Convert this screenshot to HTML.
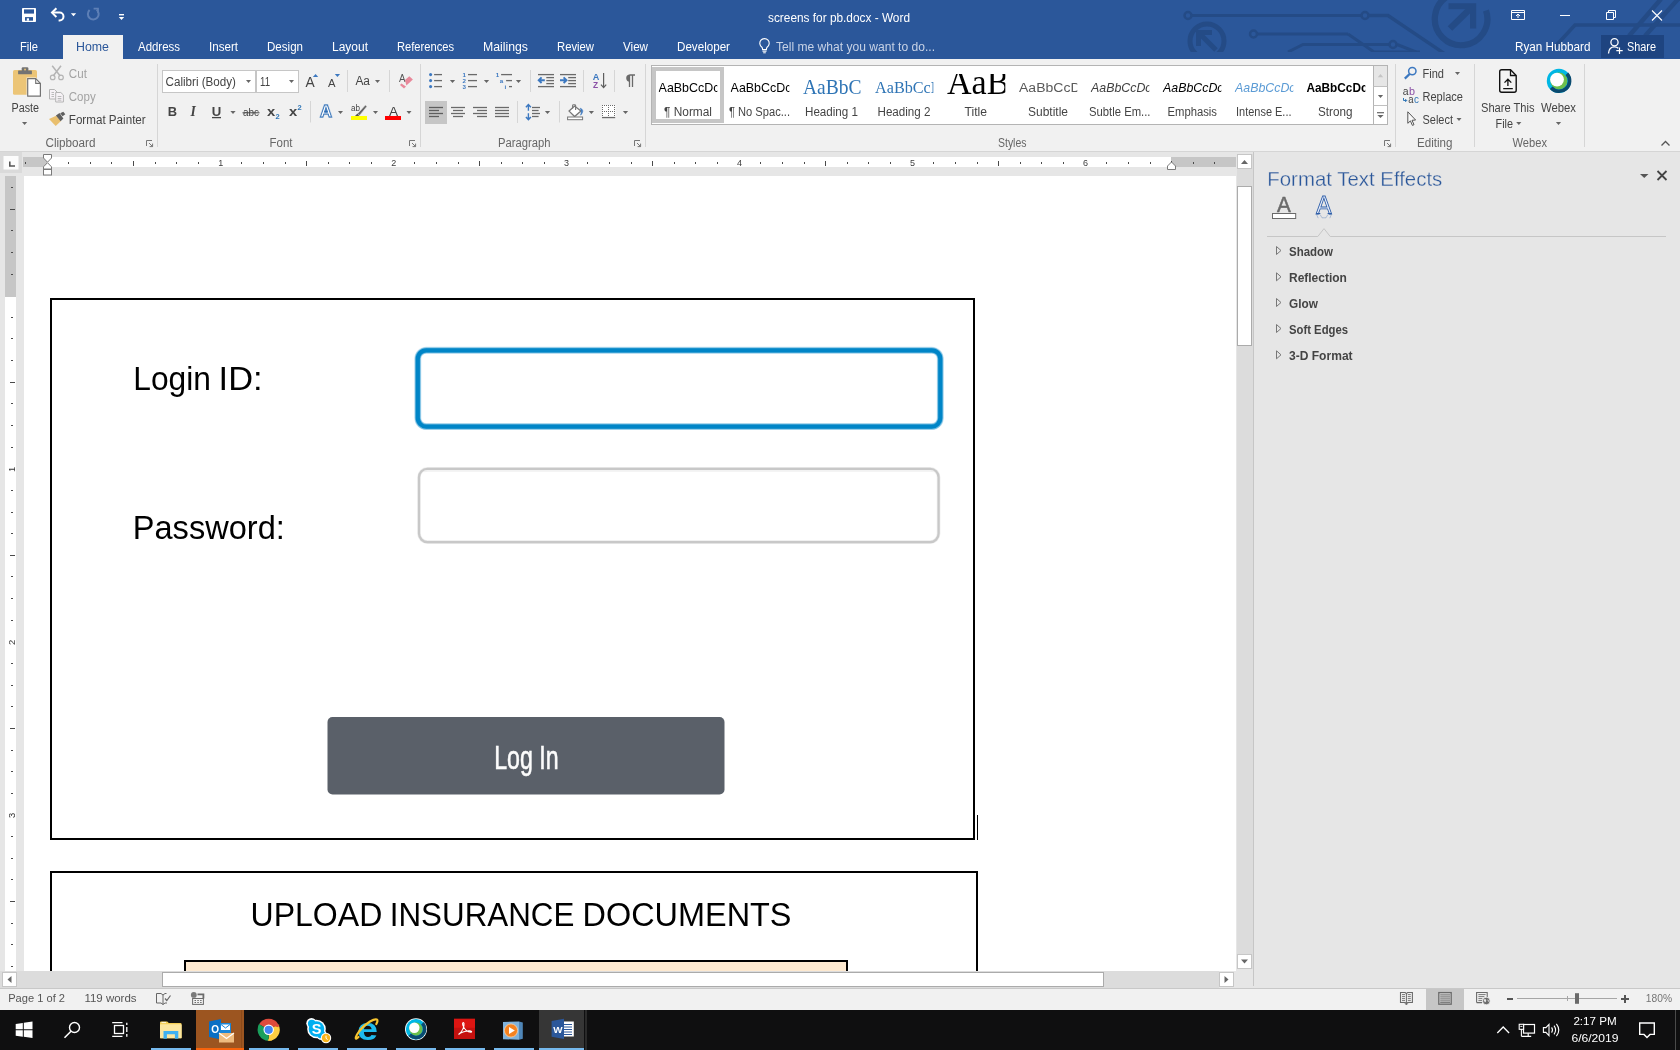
<!DOCTYPE html>
<html><head><meta charset="utf-8"><title>screens for pb.docx - Word</title>
<style>
html,body{margin:0;padding:0;width:1680px;height:1050px;overflow:hidden;background:#e6e6e6;}
svg{will-change:transform;display:block;position:absolute;left:0;top:0;}
text{font-family:"Liberation Sans",sans-serif;white-space:pre;}
.sf{font-family:"Liberation Serif",serif;}
</style></head><body>
<svg width="1680" height="1050" viewBox="0 0 1680 1050">

<!-- parts_doc -->
<rect x="0" y="152" width="1254" height="836" fill="#e6e6e6"/>
<rect x="24" y="176" width="1212" height="795" fill="#fff"/>
<rect x="23" y="157" width="1213" height="10" fill="#fff"/>
<rect x="23" y="157" width="24" height="10" fill="#c6c6c6"/>
<rect x="1171" y="157" width="65" height="10" fill="#c6c6c6"/>
<rect x="25" y="162" width="1" height="2" fill="#4a4a4a"/>
<rect x="68" y="162" width="1" height="2" fill="#4a4a4a"/>
<rect x="90" y="162" width="1" height="2" fill="#4a4a4a"/>
<rect x="111" y="162" width="1" height="2" fill="#4a4a4a"/>
<rect x="133" y="161" width="1" height="5" fill="#4a4a4a"/>
<rect x="155" y="162" width="1" height="2" fill="#4a4a4a"/>
<rect x="176" y="162" width="1" height="2" fill="#4a4a4a"/>
<rect x="198" y="162" width="1" height="2" fill="#4a4a4a"/>
<text x="220.8" y="165.8" font-size="9" fill="#3c3c3c" text-anchor="middle">1</text>
<rect x="241" y="162" width="1" height="2" fill="#4a4a4a"/>
<rect x="263" y="162" width="1" height="2" fill="#4a4a4a"/>
<rect x="285" y="162" width="1" height="2" fill="#4a4a4a"/>
<rect x="306" y="161" width="1" height="5" fill="#4a4a4a"/>
<rect x="328" y="162" width="1" height="2" fill="#4a4a4a"/>
<rect x="349" y="162" width="1" height="2" fill="#4a4a4a"/>
<rect x="371" y="162" width="1" height="2" fill="#4a4a4a"/>
<text x="393.7" y="165.8" font-size="9" fill="#3c3c3c" text-anchor="middle">2</text>
<rect x="414" y="162" width="1" height="2" fill="#4a4a4a"/>
<rect x="436" y="162" width="1" height="2" fill="#4a4a4a"/>
<rect x="458" y="162" width="1" height="2" fill="#4a4a4a"/>
<rect x="479" y="161" width="1" height="5" fill="#4a4a4a"/>
<rect x="501" y="162" width="1" height="2" fill="#4a4a4a"/>
<rect x="522" y="162" width="1" height="2" fill="#4a4a4a"/>
<rect x="544" y="162" width="1" height="2" fill="#4a4a4a"/>
<text x="566.6" y="165.8" font-size="9" fill="#3c3c3c" text-anchor="middle">3</text>
<rect x="587" y="162" width="1" height="2" fill="#4a4a4a"/>
<rect x="609" y="162" width="1" height="2" fill="#4a4a4a"/>
<rect x="631" y="162" width="1" height="2" fill="#4a4a4a"/>
<rect x="652" y="161" width="1" height="5" fill="#4a4a4a"/>
<rect x="674" y="162" width="1" height="2" fill="#4a4a4a"/>
<rect x="695" y="162" width="1" height="2" fill="#4a4a4a"/>
<rect x="717" y="162" width="1" height="2" fill="#4a4a4a"/>
<text x="739.6" y="165.8" font-size="9" fill="#3c3c3c" text-anchor="middle">4</text>
<rect x="760" y="162" width="1" height="2" fill="#4a4a4a"/>
<rect x="782" y="162" width="1" height="2" fill="#4a4a4a"/>
<rect x="804" y="162" width="1" height="2" fill="#4a4a4a"/>
<rect x="825" y="161" width="1" height="5" fill="#4a4a4a"/>
<rect x="847" y="162" width="1" height="2" fill="#4a4a4a"/>
<rect x="868" y="162" width="1" height="2" fill="#4a4a4a"/>
<rect x="890" y="162" width="1" height="2" fill="#4a4a4a"/>
<text x="912.5" y="165.8" font-size="9" fill="#3c3c3c" text-anchor="middle">5</text>
<rect x="933" y="162" width="1" height="2" fill="#4a4a4a"/>
<rect x="955" y="162" width="1" height="2" fill="#4a4a4a"/>
<rect x="977" y="162" width="1" height="2" fill="#4a4a4a"/>
<rect x="998" y="161" width="1" height="5" fill="#4a4a4a"/>
<rect x="1020" y="162" width="1" height="2" fill="#4a4a4a"/>
<rect x="1041" y="162" width="1" height="2" fill="#4a4a4a"/>
<rect x="1063" y="162" width="1" height="2" fill="#4a4a4a"/>
<text x="1085.5" y="165.8" font-size="9" fill="#3c3c3c" text-anchor="middle">6</text>
<rect x="1106" y="162" width="1" height="2" fill="#4a4a4a"/>
<rect x="1128" y="162" width="1" height="2" fill="#4a4a4a"/>
<rect x="1150" y="162" width="1" height="2" fill="#4a4a4a"/>
<rect x="1171" y="161" width="1" height="5" fill="#4a4a4a"/>
<rect x="1193" y="162" width="1" height="2" fill="#4a4a4a"/>
<rect x="1214" y="162" width="1" height="2" fill="#4a4a4a"/>
<path d="M43.5 154.5 H51.5 V158 L47.5 162.2 L43.5 158 Z" fill="#fff" stroke="#7a7a7a" stroke-width="1"/>
<path d="M43.5 169 V166.8 L47.5 162.7 L51.5 166.8 V169 Z" fill="#fff" stroke="#7a7a7a" stroke-width="1"/>
<rect x="43.5" y="169.5" width="8" height="5.5" fill="#fff" stroke="#7a7a7a" stroke-width="1"/>
<path d="M1167.5 169.5 V166 L1171.5 162 L1175.5 166 V169.5 Z" fill="#fff" stroke="#7a7a7a" stroke-width="1"/>
<rect x="0" y="152" width="22" height="21" fill="#dadada"/>
<rect x="3.5" y="156" width="15" height="13.5" fill="#fcfcfc"/>
<path d="M9.8 161.5 V166 H15" fill="none" stroke="#555" stroke-width="1.6"/>
<rect x="5" y="176" width="11" height="795" fill="#fff"/>
<rect x="5" y="176" width="11" height="121" fill="#c6c6c6"/>
<rect x="11" y="187" width="2" height="1" fill="#4a4a4a"/>
<rect x="10" y="209" width="5" height="1" fill="#4a4a4a"/>
<rect x="11" y="230" width="2" height="1" fill="#4a4a4a"/>
<rect x="11" y="252" width="2" height="1" fill="#4a4a4a"/>
<rect x="11" y="274" width="2" height="1" fill="#4a4a4a"/>
<rect x="11" y="317" width="2" height="1" fill="#4a4a4a"/>
<rect x="11" y="338" width="2" height="1" fill="#4a4a4a"/>
<rect x="11" y="360" width="2" height="1" fill="#4a4a4a"/>
<rect x="10" y="382" width="5" height="1" fill="#4a4a4a"/>
<rect x="11" y="403" width="2" height="1" fill="#4a4a4a"/>
<rect x="11" y="425" width="2" height="1" fill="#4a4a4a"/>
<rect x="11" y="447" width="2" height="1" fill="#4a4a4a"/>
<text transform="translate(15 469.3) rotate(-90)" font-size="9.4" fill="#333" text-anchor="middle">1</text>
<rect x="11" y="490" width="2" height="1" fill="#4a4a4a"/>
<rect x="11" y="512" width="2" height="1" fill="#4a4a4a"/>
<rect x="11" y="533" width="2" height="1" fill="#4a4a4a"/>
<rect x="10" y="555" width="5" height="1" fill="#4a4a4a"/>
<rect x="11" y="576" width="2" height="1" fill="#4a4a4a"/>
<rect x="11" y="598" width="2" height="1" fill="#4a4a4a"/>
<rect x="11" y="620" width="2" height="1" fill="#4a4a4a"/>
<text transform="translate(15 642.3) rotate(-90)" font-size="9.4" fill="#333" text-anchor="middle">2</text>
<rect x="11" y="663" width="2" height="1" fill="#4a4a4a"/>
<rect x="11" y="685" width="2" height="1" fill="#4a4a4a"/>
<rect x="11" y="706" width="2" height="1" fill="#4a4a4a"/>
<rect x="10" y="728" width="5" height="1" fill="#4a4a4a"/>
<rect x="11" y="750" width="2" height="1" fill="#4a4a4a"/>
<rect x="11" y="771" width="2" height="1" fill="#4a4a4a"/>
<rect x="11" y="793" width="2" height="1" fill="#4a4a4a"/>
<text transform="translate(15 815.3) rotate(-90)" font-size="9.4" fill="#333" text-anchor="middle">3</text>
<rect x="11" y="836" width="2" height="1" fill="#4a4a4a"/>
<rect x="11" y="858" width="2" height="1" fill="#4a4a4a"/>
<rect x="11" y="879" width="2" height="1" fill="#4a4a4a"/>
<rect x="10" y="901" width="5" height="1" fill="#4a4a4a"/>
<rect x="11" y="923" width="2" height="1" fill="#4a4a4a"/>
<rect x="11" y="944" width="2" height="1" fill="#4a4a4a"/>
<rect x="11" y="966" width="2" height="1" fill="#4a4a4a"/>
<clipPath id="dc"><rect x="24" y="176" width="1212" height="795"/></clipPath>
<g clip-path="url(#dc)">
<rect x="51" y="299" width="923" height="540" fill="#fff" stroke="#000" stroke-width="2"/>
<text x="133.3" y="390" font-size="33" fill="#000" textLength="77.7" lengthAdjust="spacingAndGlyphs">Login</text>
<text x="218.6" y="390" font-size="33" fill="#000" textLength="44.0" lengthAdjust="spacingAndGlyphs">ID:</text>
<rect x="417.8" y="350.3" width="522.5" height="76.3" fill="#fff" stroke="#0085c7" stroke-width="7" rx="8.5" stroke-opacity="0.22"/>
<rect x="417.8" y="350.3" width="522.5" height="76.3" fill="none" stroke="#0085c7" stroke-width="5.8" rx="8.5" stroke-opacity="0.45"/>
<rect x="417.8" y="350.3" width="522.5" height="76.3" fill="none" stroke="#0085c7" stroke-width="4.2" rx="8.5"/>
<text x="132.8" y="539" font-size="32.8" fill="#000" textLength="152.0" lengthAdjust="spacingAndGlyphs">Password:</text>
<rect x="419" y="468.8" width="519.6" height="73.3" fill="#fff" stroke="#c8c8c8" stroke-width="3.6" rx="8.5" stroke-opacity="0.35"/>
<rect x="419" y="468.8" width="519.6" height="73.3" fill="none" stroke="#c8c8c8" stroke-width="2.2" rx="8.5"/>
<path d="M424 471.6 Q425 471 428 471 H930 Q933 471 934 471.6" fill="none" stroke="#f1f1f1" stroke-width="1.6"/>
<rect x="327.5" y="717" width="397" height="77.5" fill="#5a6069" rx="5"/>
<text x="494.2" y="769.3" font-size="33.6" fill="#fcfcfc" textLength="64.4" lengthAdjust="spacingAndGlyphs" stroke="#fcfcfc" stroke-width="0.6">Log In</text>
<line x1="977.5" y1="815" x2="977.5" y2="840" stroke="#000" stroke-width="1" />
<rect x="51" y="872" width="926" height="200" fill="#fff" stroke="#000" stroke-width="2"/>
<text x="250.5" y="925.5" font-size="33" fill="#000" textLength="131.8" lengthAdjust="spacingAndGlyphs">UPLOAD</text>
<text x="389.8" y="925.5" font-size="33" fill="#000" textLength="184.5" lengthAdjust="spacingAndGlyphs">INSURANCE</text>
<text x="582.6" y="925.5" font-size="33" fill="#000" textLength="208.9" lengthAdjust="spacingAndGlyphs">DOCUMENTS</text>
<rect x="185" y="961" width="662" height="100" fill="#fde9d0" stroke="#000" stroke-width="2"/>
</g>
<rect x="1237" y="152" width="16" height="817" fill="#dcdcdc"/>
<rect x="1237" y="152" width="16" height="2" fill="#e6e6e6"/>
<rect x="1237.5" y="154.5" width="14" height="14" fill="#fff" stroke="#c6c6c6" stroke-width="1"/>
<path d="M1241 164 h7 l-3.5 -4 z" fill="#666"/>
<rect x="1237.5" y="186.5" width="14" height="159" fill="#fff" stroke="#ababab" stroke-width="1"/>
<rect x="1237.5" y="954.5" width="14" height="14" fill="#fff" stroke="#c6c6c6" stroke-width="1"/>
<path d="M1241 959.5 h7 l-3.5 4 z" fill="#666"/>
<rect x="0" y="971" width="1219" height="17" fill="#dcdcdc"/>
<rect x="1219" y="971" width="17" height="17" fill="#e6e6e6"/>
<rect x="1236" y="971" width="18" height="17" fill="#e6e6e6"/>
<rect x="2.5" y="972.5" width="14" height="14" fill="#fff" stroke="#c6c6c6" stroke-width="1"/>
<path d="M11.5 976 v7 l-4 -3.5 z" fill="#666"/>
<rect x="162.5" y="972.5" width="941" height="14" fill="#fff" stroke="#ababab" stroke-width="1"/>
<rect x="1219.5" y="972.5" width="14" height="14" fill="#fff" stroke="#c6c6c6" stroke-width="1"/>
<path d="M1224.5 976 v7 l4 -3.5 z" fill="#666"/>

<!-- parts_pane -->
<rect x="1254" y="152" width="426" height="836" fill="#e6e6e6"/>
<line x1="1253.5" y1="152" x2="1253.5" y2="986" stroke="#c6c6c6" stroke-width="1" />
<text x="1267.3" y="185.7" font-size="20.6" fill="#2b579a" textLength="175.0" lengthAdjust="spacingAndGlyphs" stroke="#e6e6e6" stroke-width="0.3">Format Text Effects</text>
<path d="M1640 174 h8.5 l-4.25 4 z" fill="#555"/>
<path d="M1657.5 171 L1666.5 180 M1666.5 171 L1657.5 180" fill="none" stroke="#444" stroke-width="1.8"/>
<text x="1277.1" y="211.7" font-size="22" fill="#6a6a6a" textLength="13.8" lengthAdjust="spacingAndGlyphs" stroke="#6a6a6a" stroke-width="0.5">A</text>
<rect x="1272.5" y="213.5" width="23.2" height="5" fill="#fff" stroke="#6a6a6a" stroke-width="1"/>
<text x="1316.1" y="214.3" font-size="25.5" fill="#e9eefa" stroke="#2e5ea8" stroke-width="0.9" textLength="15.7" lengthAdjust="spacingAndGlyphs">A</text>
<path d="M1316.3 213.7 H1320.3 M1327.6 213.7 H1331.6" fill="none" stroke="#2e5ea8" stroke-width="1.2"/>
<path d="M1316.8 215 L1318.2 218.2 M1331.2 215 L1329.8 218.2 M1320.4 215 L1322 217.8 H1326 L1327.6 215" fill="none" stroke="#2e5ea8" stroke-width="0.8" opacity="0.4"/>
<path d="M1267 236.5 H1317.8 L1324 228.6 L1330.2 236.5 H1666" fill="none" stroke="#c6c6c6" stroke-width="1"/>
<path d="M1276.5 246.5 v8 l4.5 -4 z" fill="none" stroke="#777" stroke-width="1"/>
<text x="1289" y="256" font-size="12" fill="#444" textLength="44" lengthAdjust="spacingAndGlyphs" font-weight="bold">Shadow</text>
<path d="M1276.5 272.8 v8 l4.5 -4 z" fill="none" stroke="#777" stroke-width="1"/>
<text x="1289" y="282.3" font-size="12" fill="#444" textLength="57.9" lengthAdjust="spacingAndGlyphs" font-weight="bold">Reflection</text>
<path d="M1276.5 298.5 v8 l4.5 -4 z" fill="none" stroke="#777" stroke-width="1"/>
<text x="1289" y="308" font-size="12" fill="#444" textLength="28.8" lengthAdjust="spacingAndGlyphs" font-weight="bold">Glow</text>
<path d="M1276.5 324.5 v8 l4.5 -4 z" fill="none" stroke="#777" stroke-width="1"/>
<text x="1289" y="334" font-size="12" fill="#444" textLength="59" lengthAdjust="spacingAndGlyphs" font-weight="bold">Soft Edges</text>
<path d="M1276.5 350.8 v8 l4.5 -4 z" fill="none" stroke="#777" stroke-width="1"/>
<text x="1289" y="360.3" font-size="12" fill="#444" textLength="63.6" lengthAdjust="spacingAndGlyphs" font-weight="bold">3-D Format</text>

<!-- parts_header -->
<rect x="0" y="0" width="1680" height="59" fill="#2b579a"/>
<clipPath id="hc"><rect x="1100" y="0" width="580" height="52"/></clipPath>
<g clip-path="url(#hc)">
<line x1="1192" y1="15.5" x2="1361" y2="15.5" stroke="#244b86" stroke-width="3" />
<circle cx="1188" cy="15.5" r="3.5" fill="#2b579a" stroke="#244b86" stroke-width="2.5"/>
<circle cx="1365" cy="15.5" r="3.5" fill="#2b579a" stroke="#244b86" stroke-width="2.5"/>
<path d="M1369 15.5 H1388 L1445 54" fill="none" stroke="#244b86" stroke-width="3.4"/>
<line x1="1257" y1="34" x2="1348" y2="34" stroke="#244b86" stroke-width="3" />
<circle cx="1253.5" cy="34" r="3.5" fill="#2b579a" stroke="#244b86" stroke-width="2.5"/>
<path d="M1348 34 L1374 52 H1420" fill="none" stroke="#244b86" stroke-width="3"/>
<path d="M1288 52 L1303 44.5 H1389" fill="none" stroke="#244b86" stroke-width="3"/>
<circle cx="1393" cy="44.5" r="3.5" fill="#2b579a" stroke="#244b86" stroke-width="2.5"/>
<path d="M1397 44.5 L1416 52" fill="none" stroke="#244b86" stroke-width="3"/>
<path d="M1469.5 -6 A26.3 26.3 0 1 0 1486 10.5" fill="none" stroke="#244b86" stroke-width="6.2"/>
<path d="M1450 28.5 L1473 6" fill="none" stroke="#244b86" stroke-width="6.5"/>
<path d="M1448.5 3.2 H1476.2 V28.5 H1470 V9.2 H1448.5 Z" fill="#244b86"/>
<circle cx="1207" cy="41" r="17" fill="none" stroke="#244b86" stroke-width="5"/>
<path d="M1216 50 L1200 34" fill="none" stroke="#244b86" stroke-width="5"/>
<path d="M1196 46 V30 H1212 V35 H1201 V46 Z" fill="#244b86"/>
<path d="M1552 50 L1575 25 H1680" fill="none" stroke="#244b86" stroke-width="3.6"/>
<path d="M1629 36 L1661 -1" fill="none" stroke="#244b86" stroke-width="4.5"/>
<path d="M1645 36 L1680 -3" fill="none" stroke="#244b86" stroke-width="4.5"/>
</g>
<rect x="22" y="8" width="14" height="14" fill="#fff" rx="0.8"/>
<rect x="24" y="9.4" width="10" height="4.2" fill="#2b579a"/>
<rect x="25" y="17.1" width="8" height="3.6" fill="#2b579a"/>
<rect x="26.8" y="18.3" width="2.2" height="2.4" fill="#fff"/>
<path d="M52.5 12.6 H59.6 A3.9 3.9 0 0 1 59.6 20.4 H58.6" fill="none" stroke="#fff" stroke-width="2"/>
<path d="M56.4 8.2 L52 12.6 L56.4 17" fill="none" stroke="#fff" stroke-width="2"/>
<path d="M70.8 13.3 h5.4 l-2.7 3.0 z" fill="#fff"/>
<path d="M96.6 9.8 A5.4 5.4 0 1 1 89.6 10.1" fill="none" stroke="#5d7fb6" stroke-width="2"/>
<path d="M93.6 8.6 H98 V13" fill="none" stroke="#5d7fb6" stroke-width="1.8"/>
<rect x="119" y="14" width="5" height="1.4" fill="#fff"/>
<path d="M118.8 17 h5.4 l-2.7 3.0 z" fill="#fff"/>
<text x="768" y="22" font-size="12" fill="#fff" textLength="142" lengthAdjust="spacingAndGlyphs">screens for pb.docx - Word</text>
<path d="M1511.5 10.5 H1524.5 V19.5 H1511.5 Z M1511.5 12.5 H1524.5" fill="none" stroke="#fff" stroke-width="1"/>
<path d="M1518 18 V14.2 M1516 16 L1518 14 L1520 16" fill="none" stroke="#fff" stroke-width="1"/>
<line x1="1560" y1="15.5" x2="1570" y2="15.5" stroke="#fff" stroke-width="1" />
<path d="M1606.5 12.5 H1613.5 V19.5 H1606.5 Z" fill="none" stroke="#fff" stroke-width="1"/>
<path d="M1608.5 12.5 V10.5 H1615.5 V17.5 H1613.5" fill="none" stroke="#fff" stroke-width="1"/>
<path d="M1652 10.5 L1662 20.5 M1662 10.5 L1652 20.5" fill="none" stroke="#fff" stroke-width="1.1"/>
<rect x="63" y="35" width="60" height="24" fill="#f1f1f1"/>
<text x="20" y="51" font-size="12" fill="#fff" textLength="18" lengthAdjust="spacingAndGlyphs">File</text>
<text x="76" y="51" font-size="12" fill="#2b579a" textLength="33" lengthAdjust="spacingAndGlyphs">Home</text>
<text x="138" y="51" font-size="12" fill="#fff" textLength="42" lengthAdjust="spacingAndGlyphs">Address</text>
<text x="209" y="51" font-size="12" fill="#fff" textLength="29" lengthAdjust="spacingAndGlyphs">Insert</text>
<text x="267" y="51" font-size="12" fill="#fff" textLength="36" lengthAdjust="spacingAndGlyphs">Design</text>
<text x="332" y="51" font-size="12" fill="#fff" textLength="36" lengthAdjust="spacingAndGlyphs">Layout</text>
<text x="397" y="51" font-size="12" fill="#fff" textLength="57" lengthAdjust="spacingAndGlyphs">References</text>
<text x="483" y="51" font-size="12" fill="#fff" textLength="45" lengthAdjust="spacingAndGlyphs">Mailings</text>
<text x="557" y="51" font-size="12" fill="#fff" textLength="37" lengthAdjust="spacingAndGlyphs">Review</text>
<text x="623" y="51" font-size="12" fill="#fff" textLength="25" lengthAdjust="spacingAndGlyphs">View</text>
<text x="677" y="51" font-size="12" fill="#fff" textLength="53" lengthAdjust="spacingAndGlyphs">Developer</text>
<path d="M761.9 47.2 A4.7 4.7 0 1 1 767.1 47.2 C766.5 48 766.4 48.6 766.4 49.6 H762.6 C762.6 48.6 762.5 48 761.9 47.2 Z" fill="none" stroke="#fff" stroke-width="1.1"/>
<line x1="762.5" y1="51.2" x2="766.5" y2="51.2" stroke="#fff" stroke-width="1.1" />
<line x1="763.2" y1="52.8" x2="765.8" y2="52.8" stroke="#fff" stroke-width="1" />
<text x="776" y="51" font-size="12" fill="#c8d3e6" textLength="159" lengthAdjust="spacingAndGlyphs">Tell me what you want to do...</text>
<text x="1515" y="51" font-size="12" fill="#fff" textLength="75.5" lengthAdjust="spacingAndGlyphs">Ryan Hubbard</text>
<rect x="1601" y="35" width="63" height="23" fill="#1e4480"/>
<circle cx="1614.5" cy="42.2" r="3.6" fill="none" stroke="#fff" stroke-width="1.3"/>
<path d="M1608.5 53.5 c0.3 -4.2 2.5 -6.6 6 -6.6 c1.6 0 2.8 0.5 3.8 1.4" fill="none" stroke="#fff" stroke-width="1.3"/>
<path d="M1619.5 47.5 V54 M1616.3 50.7 H1622.7" fill="none" stroke="#fff" stroke-width="1.2"/>
<text x="1627" y="51" font-size="12" fill="#fff" textLength="29" lengthAdjust="spacingAndGlyphs">Share</text>

<!-- parts_ribbon -->
<rect x="0" y="59" width="1680" height="92" fill="#f1f1f1"/>
<rect x="0" y="151" width="1680" height="1" fill="#d5d5d5"/>
<rect x="13" y="70" width="24" height="24.8" fill="#ecc577" rx="1.6"/>
<rect x="18.1" y="70.5" width="13.8" height="3.8" fill="#737373" rx="0.6"/>
<rect x="21.7" y="67.2" width="6.7" height="4" fill="#737373" rx="1.2"/>
<rect x="24.2" y="68.7" width="1.7" height="1.7" fill="#ecc577"/>
<path d="M26.6 77.6 H36 L41.5 83.1 V97.2 H26.6 Z" fill="#f1f1f1"/>
<path d="M27.7 78.7 H35.7 L40.4 83.4 V96.1 H27.7 Z" fill="#fff" stroke="#737373" stroke-width="1.2"/>
<path d="M35.7 78.7 V83.4 H40.4" fill="none" stroke="#737373" stroke-width="1.1"/>
<text x="11.5" y="112" font-size="12" fill="#444" textLength="27.5" lengthAdjust="spacingAndGlyphs">Paste</text>
<path d="M22.0 122 h5.2 l-2.6 3.0 z" fill="#666"/>
<path d="M52.2 65.7 L60.2 76 M61 65.7 L53.2 76" fill="none" stroke="#b4b4b4" stroke-width="1.5"/>
<circle cx="52.7" cy="77.4" r="2.3" fill="none" stroke="#b4b4b4" stroke-width="1.2"/>
<circle cx="61" cy="77.4" r="2.3" fill="none" stroke="#b4b4b4" stroke-width="1.2"/>
<text x="68.8" y="77.8" font-size="12" fill="#a3a3a3" textLength="18.1" lengthAdjust="spacingAndGlyphs">Cut</text>
<path d="M49.5 89.5 H54.5 L57 92 V99 H49.5 Z" fill="#f6f2f6" stroke="#b4b4b4" stroke-width="1"/>
<path d="M55.7 92.5 H60.8 L63.4 95 V102 H55.7 Z" fill="#f6f2f6" stroke="#b4b4b4" stroke-width="1"/>
<path d="M51.5 92.5 H54 M51.5 94.5 H54 M51.5 96.5 H54 M57.7 96.5 H61.4 M57.7 98.5 H61.4 M57.7 100.2 H61.4" fill="none" stroke="#b4b4b4" stroke-width="0.9"/>
<text x="68.8" y="100.6" font-size="12" fill="#a3a3a3" textLength="26.9" lengthAdjust="spacingAndGlyphs">Copy</text>
<path d="M49 119 L56.2 115.7 L61 121 L55.7 125.9 Z" fill="#e9bf6e"/>
<path d="M55.9 115.6 L59.5 113.1 L63.4 118.6 L60.6 121.2 Z" fill="#5f5f5f"/>
<path d="M60.2 113.2 L63.3 111.7 L65.3 114.3 L62.6 116.3 Z" fill="#5f5f5f"/>
<text x="68.8" y="123.5" font-size="12" fill="#444" textLength="76.9" lengthAdjust="spacingAndGlyphs">Format Painter</text>
<text x="45.5" y="147" font-size="12" fill="#666" textLength="50.0" lengthAdjust="spacingAndGlyphs">Clipboard</text>
<path d="M146.5 146 v-5.5 h5.5" fill="none" stroke="#777" stroke-width="1"/>
<path d="M149 143 l3.6 3.6 m0 -3 v3 h-3" fill="none" stroke="#777" stroke-width="1"/>
<line x1="157.5" y1="64" x2="157.5" y2="147" stroke="#d6d6d6" stroke-width="1" />
<rect x="162.5" y="70.5" width="93" height="22" fill="#fff" stroke="#c6c6c6" stroke-width="1"/>
<text x="165.5" y="86" font-size="12" fill="#444" textLength="70.5" lengthAdjust="spacingAndGlyphs">Calibri (Body)</text>
<path d="M246.0 80 h5 l-2.5 3 z" fill="#666"/>
<rect x="256.5" y="70.5" width="42" height="22" fill="#fff" stroke="#c6c6c6" stroke-width="1"/>
<text x="260" y="86" font-size="12" fill="#444" textLength="10" lengthAdjust="spacingAndGlyphs">11</text>
<path d="M289.0 80 h5 l-2.5 3 z" fill="#666"/>
<text x="305.4" y="87" font-size="14" fill="#444" textLength="9.2" lengthAdjust="spacingAndGlyphs">A</text>
<path d="M312.9 77 l2.65 -3 l2.65 3 z" fill="#3c78c0"/>
<text x="328" y="87" font-size="11" fill="#444" textLength="7.5" lengthAdjust="spacingAndGlyphs">A</text>
<path d="M334.8 74 h5.3 l-2.65 3 z" fill="#3c78c0"/>
<line x1="347.5" y1="70" x2="347.5" y2="92" stroke="#d6d6d6" stroke-width="1" />
<text x="355.4" y="85" font-size="12" fill="#444" textLength="14.6" lengthAdjust="spacingAndGlyphs">Aa</text>
<path d="M375.0 80 h5 l-2.5 3 z" fill="#666"/>
<line x1="389.5" y1="70" x2="389.5" y2="92" stroke="#d6d6d6" stroke-width="1" />
<text x="398.9" y="82" font-size="11.5" fill="#555" textLength="6.5" lengthAdjust="spacingAndGlyphs">A</text>
<path d="M405 79.9 L409.3 76.3 L412.9 79.5 L406.4 85.6 Z" fill="#e8889a"/>
<path d="M400 84.9 L401.4 83.4 L406 86.6 L404 88.4 Z" fill="#e8889a"/>
<text x="167.8" y="115.9" font-size="12.8" fill="#444" textLength="9.3" lengthAdjust="spacingAndGlyphs" font-weight="bold">B</text>
<text x="190.6" y="115.9" font-size="13.6" fill="#444" font-weight="bold" font-style="italic" class="sf">I</text>
<text x="211.8" y="115.9" font-size="12.6" fill="#444" textLength="9.5" lengthAdjust="spacingAndGlyphs" font-weight="bold">U</text>
<line x1="212" y1="117.6" x2="221" y2="117.6" stroke="#444" stroke-width="1.3" />
<path d="M230.4 111 h5.2 l-2.6 3.0 z" fill="#666"/>
<text x="243" y="115.9" font-size="10.5" fill="#444" textLength="16" lengthAdjust="spacingAndGlyphs">abc</text>
<line x1="242.5" y1="112.8" x2="259.5" y2="112.8" stroke="#444" stroke-width="1" />
<text x="267.1" y="115.9" font-size="13.4" fill="#444" textLength="8.2" lengthAdjust="spacingAndGlyphs" font-weight="bold">x</text>
<text x="275.4" y="119" font-size="7.2" fill="#2e75b6" textLength="4.2" lengthAdjust="spacingAndGlyphs" font-weight="bold">2</text>
<text x="289.1" y="115.9" font-size="13.4" fill="#444" textLength="8.2" lengthAdjust="spacingAndGlyphs" font-weight="bold">x</text>
<text x="297.4" y="110.3" font-size="7.2" fill="#2e75b6" textLength="4.2" lengthAdjust="spacingAndGlyphs" font-weight="bold">2</text>
<line x1="310.5" y1="101" x2="310.5" y2="122.5" stroke="#d6d6d6" stroke-width="1" />
<text x="320" y="117" font-size="16.6" fill="#fff" font-weight="bold" stroke="#9dbde0" stroke-width="2" textLength="12" lengthAdjust="spacingAndGlyphs" opacity="0.6">A</text>
<text x="320" y="117" font-size="16.6" fill="#fff" font-weight="bold" stroke="#2e6db5" stroke-width="0.8" textLength="12" lengthAdjust="spacingAndGlyphs">A</text>
<path d="M324.5 112.4 L326 108.6 L327.5 112.4 Z" fill="#2e6db5"/>
<path d="M338.0 111 h5 l-2.5 3 z" fill="#666"/>
<text x="351" y="111" font-size="9.5" fill="#444" textLength="9" lengthAdjust="spacingAndGlyphs">ab</text>
<path d="M357.6 113.6 L365.4 105 L367 106.4 L359.6 115.4 Z" fill="#666" stroke="#f1f1f1" stroke-width="0.6"/>
<path d="M355 116 L357.4 113.6 L359.4 115.4 L358 116 Z" fill="#555"/>
<rect x="351" y="116" width="16" height="4" fill="#ffff00"/>
<path d="M373.0 111 h5 l-2.5 3 z" fill="#666"/>
<text x="388.9" y="115.9" font-size="13.4" fill="#444" textLength="9.1" lengthAdjust="spacingAndGlyphs">A</text>
<rect x="385" y="116" width="16" height="4" fill="#f00"/>
<path d="M406.5 111 h5 l-2.5 3 z" fill="#666"/>
<text x="269.5" y="147" font-size="12" fill="#666" textLength="23.0" lengthAdjust="spacingAndGlyphs">Font</text>
<path d="M409.5 146 v-5.5 h5.5" fill="none" stroke="#777" stroke-width="1"/>
<path d="M412 143 l3.6 3.6 m0 -3 v3 h-3" fill="none" stroke="#777" stroke-width="1"/>
<line x1="420.5" y1="64" x2="420.5" y2="147" stroke="#d6d6d6" stroke-width="1" />
<circle cx="430.6" cy="74.6" r="1.55" fill="#3c78c0"/>
<line x1="434.1" y1="74.6" x2="442" y2="74.6" stroke="#6a6a6a" stroke-width="1.3" />
<circle cx="430.6" cy="80.6" r="1.55" fill="#3c78c0"/>
<line x1="434.1" y1="80.6" x2="442" y2="80.6" stroke="#6a6a6a" stroke-width="1.3" />
<circle cx="430.6" cy="86.6" r="1.55" fill="#3c78c0"/>
<line x1="434.1" y1="86.6" x2="442" y2="86.6" stroke="#6a6a6a" stroke-width="1.3" />
<path d="M449.9 80 h5.2 l-2.6 3.0 z" fill="#666"/>
<text x="462.4" y="76.69999999999999" font-size="6.2" fill="#3c78c0" font-weight="bold">1</text>
<line x1="468" y1="74.6" x2="477" y2="74.6" stroke="#6a6a6a" stroke-width="1.3" />
<text x="462.4" y="82.69999999999999" font-size="6.2" fill="#3c78c0" font-weight="bold">2</text>
<line x1="468" y1="80.6" x2="477" y2="80.6" stroke="#6a6a6a" stroke-width="1.3" />
<text x="462.4" y="88.69999999999999" font-size="6.2" fill="#3c78c0" font-weight="bold">3</text>
<line x1="468" y1="86.6" x2="477" y2="86.6" stroke="#6a6a6a" stroke-width="1.3" />
<path d="M483.9 80 h5.2 l-2.6 3.0 z" fill="#666"/>
<text x="495.8" y="76.7" font-size="6.2" fill="#3c78c0" font-weight="bold">1</text>
<line x1="501.1" y1="74.6" x2="512" y2="74.6" stroke="#6a6a6a" stroke-width="1.3" />
<text x="499.8" y="82.6" font-size="6.2" fill="#3c78c0" font-weight="bold">a</text>
<line x1="506.1" y1="80.6" x2="512" y2="80.6" stroke="#6a6a6a" stroke-width="1.3" />
<text x="504.6" y="88.7" font-size="6.2" fill="#3c78c0" font-weight="bold">i</text>
<line x1="509" y1="86.6" x2="512" y2="86.6" stroke="#6a6a6a" stroke-width="1.3" />
<path d="M515.9 80 h5.2 l-2.6 3.0 z" fill="#666"/>
<line x1="530.5" y1="70" x2="530.5" y2="92" stroke="#d6d6d6" stroke-width="1" />
<line x1="538" y1="74.6" x2="554" y2="74.6" stroke="#6a6a6a" stroke-width="1.3" />
<line x1="560" y1="74.6" x2="576" y2="74.6" stroke="#6a6a6a" stroke-width="1.3" />
<line x1="538" y1="86.6" x2="554" y2="86.6" stroke="#6a6a6a" stroke-width="1.3" />
<line x1="560" y1="86.6" x2="576" y2="86.6" stroke="#6a6a6a" stroke-width="1.3" />
<line x1="546.3" y1="77.6" x2="554" y2="77.6" stroke="#6a6a6a" stroke-width="1.3" />
<line x1="568.2" y1="77.6" x2="576" y2="77.6" stroke="#6a6a6a" stroke-width="1.3" />
<line x1="546.3" y1="80.6" x2="554" y2="80.6" stroke="#6a6a6a" stroke-width="1.3" />
<line x1="568.2" y1="80.6" x2="576" y2="80.6" stroke="#6a6a6a" stroke-width="1.3" />
<line x1="546.3" y1="83.6" x2="554" y2="83.6" stroke="#6a6a6a" stroke-width="1.3" />
<line x1="568.2" y1="83.6" x2="576" y2="83.6" stroke="#6a6a6a" stroke-width="1.3" />
<path d="M544.8 80.2 H539.5 M541.6 77.4 L538.7 80.2 L541.6 83" fill="none" stroke="#3c78c0" stroke-width="1.9"/>
<path d="M560 80.2 H565.6 M563.6 77.4 L566.5 80.2 L563.6 83" fill="none" stroke="#3c78c0" stroke-width="1.9"/>
<line x1="583.5" y1="70" x2="583.5" y2="92" stroke="#d6d6d6" stroke-width="1" />
<text x="592.7" y="79.8" font-size="9.6" fill="#3c78c0" textLength="6.6" lengthAdjust="spacingAndGlyphs" font-weight="bold">A</text>
<text x="592.9" y="87.9" font-size="9.2" fill="#8a4fa5" textLength="5.1" lengthAdjust="spacingAndGlyphs" font-weight="bold">Z</text>
<path d="M603.6 73 V87.6 M601 84.6 L603.6 87.6 L606.2 84.6" fill="none" stroke="#5e5e5e" stroke-width="1.2"/>
<line x1="614.5" y1="70" x2="614.5" y2="92" stroke="#d6d6d6" stroke-width="1" />
<path d="M629.5 75 H635 M629.5 75 V87 M632.5 75 V87" fill="none" stroke="#6a6a6a" stroke-width="1.3"/>
<path d="M629.8 74.5 A3.6 3.6 0 0 0 629.8 81.7 Z" fill="#6a6a6a"/>
<rect x="425" y="101" width="22" height="23" fill="#c6c6c6"/>
<line x1="429" y1="107.5" x2="443" y2="107.5" stroke="#5e5e5e" stroke-width="1.3" />
<line x1="451" y1="107.5" x2="465" y2="107.5" stroke="#6a6a6a" stroke-width="1.3" />
<line x1="473" y1="107.5" x2="487" y2="107.5" stroke="#6a6a6a" stroke-width="1.3" />
<line x1="495" y1="107.5" x2="509" y2="107.5" stroke="#6a6a6a" stroke-width="1.3" />
<line x1="429" y1="110.5" x2="439" y2="110.5" stroke="#5e5e5e" stroke-width="1.3" />
<line x1="453" y1="110.5" x2="463" y2="110.5" stroke="#6a6a6a" stroke-width="1.3" />
<line x1="477" y1="110.5" x2="487" y2="110.5" stroke="#6a6a6a" stroke-width="1.3" />
<line x1="495" y1="110.5" x2="509" y2="110.5" stroke="#6a6a6a" stroke-width="1.3" />
<line x1="429" y1="113.5" x2="443" y2="113.5" stroke="#5e5e5e" stroke-width="1.3" />
<line x1="451" y1="113.5" x2="465" y2="113.5" stroke="#6a6a6a" stroke-width="1.3" />
<line x1="473" y1="113.5" x2="487" y2="113.5" stroke="#6a6a6a" stroke-width="1.3" />
<line x1="495" y1="113.5" x2="509" y2="113.5" stroke="#6a6a6a" stroke-width="1.3" />
<line x1="429" y1="116.5" x2="439" y2="116.5" stroke="#5e5e5e" stroke-width="1.3" />
<line x1="453" y1="116.5" x2="463" y2="116.5" stroke="#6a6a6a" stroke-width="1.3" />
<line x1="477" y1="116.5" x2="487" y2="116.5" stroke="#6a6a6a" stroke-width="1.3" />
<line x1="495" y1="116.5" x2="509" y2="116.5" stroke="#6a6a6a" stroke-width="1.3" />
<line x1="517.5" y1="101" x2="517.5" y2="123" stroke="#d6d6d6" stroke-width="1" />
<path d="M528.4 104.5 V110.8 M525.9 107.2 L528.4 104.5 L530.9 107.2 M528.4 113.3 V119.6 M525.9 116.9 L528.4 119.6 L530.9 116.9" fill="none" stroke="#3c78c0" stroke-width="1.4"/>
<line x1="532" y1="107.5" x2="540" y2="107.5" stroke="#6a6a6a" stroke-width="1.3" />
<line x1="532" y1="110.5" x2="538.6" y2="110.5" stroke="#6a6a6a" stroke-width="1.3" />
<line x1="532" y1="113.5" x2="540" y2="113.5" stroke="#6a6a6a" stroke-width="1.3" />
<line x1="532" y1="116.5" x2="538.6" y2="116.5" stroke="#6a6a6a" stroke-width="1.3" />
<path d="M544.9 111 h5.2 l-2.6 3.0 z" fill="#666"/>
<line x1="559.5" y1="101" x2="559.5" y2="122.5" stroke="#d6d6d6" stroke-width="1" />
<path d="M569.1 111.1 L574.6 106.1 L580.9 111.1 L574.6 116.5 Z" fill="#fff" stroke="#777" stroke-width="1.3"/>
<path d="M572.6 108.6 V105.6 a0.9 0.9 0 0 1 0.9 -0.9 h1.2 a0.9 0.9 0 0 1 0.9 0.9 V110" fill="none" stroke="#777" stroke-width="1.1"/>
<path d="M580.2 108.2 C583 109.2 584 111.5 580.6 115.2 C581.6 112.6 581.5 110.6 580.2 108.2 Z" fill="#3c78c0" stroke="#3c78c0" stroke-width="0.6"/>
<rect x="567.6" y="117" width="15" height="2.7" fill="#fff" stroke="#777" stroke-width="1"/>
<path d="M588.8 111 h5.2 l-2.6 3.0 z" fill="#666"/>
<rect x="602" y="105" width="13.5" height="12.5" fill="#fff"/>
<rect x="602" y="105" width="1" height="1" fill="#6a6a6a"/>
<rect x="602" y="111" width="1" height="1" fill="#6a6a6a"/>
<rect x="604" y="105" width="1" height="1" fill="#6a6a6a"/>
<rect x="604" y="111" width="1" height="1" fill="#6a6a6a"/>
<rect x="606" y="105" width="1" height="1" fill="#6a6a6a"/>
<rect x="606" y="111" width="1" height="1" fill="#6a6a6a"/>
<rect x="608" y="105" width="1" height="1" fill="#6a6a6a"/>
<rect x="608" y="111" width="1" height="1" fill="#6a6a6a"/>
<rect x="610" y="105" width="1" height="1" fill="#6a6a6a"/>
<rect x="610" y="111" width="1" height="1" fill="#6a6a6a"/>
<rect x="612" y="105" width="1" height="1" fill="#6a6a6a"/>
<rect x="612" y="111" width="1" height="1" fill="#6a6a6a"/>
<rect x="614" y="105" width="1" height="1" fill="#6a6a6a"/>
<rect x="614" y="111" width="1" height="1" fill="#6a6a6a"/>
<rect x="602" y="105" width="1" height="1" fill="#6a6a6a"/>
<rect x="608" y="105" width="1" height="1" fill="#6a6a6a"/>
<rect x="614" y="105" width="1" height="1" fill="#6a6a6a"/>
<rect x="602" y="107" width="1" height="1" fill="#6a6a6a"/>
<rect x="608" y="107" width="1" height="1" fill="#6a6a6a"/>
<rect x="614" y="107" width="1" height="1" fill="#6a6a6a"/>
<rect x="602" y="109" width="1" height="1" fill="#6a6a6a"/>
<rect x="608" y="109" width="1" height="1" fill="#6a6a6a"/>
<rect x="614" y="109" width="1" height="1" fill="#6a6a6a"/>
<rect x="602" y="111" width="1" height="1" fill="#6a6a6a"/>
<rect x="608" y="111" width="1" height="1" fill="#6a6a6a"/>
<rect x="614" y="111" width="1" height="1" fill="#6a6a6a"/>
<rect x="602" y="113" width="1" height="1" fill="#6a6a6a"/>
<rect x="608" y="113" width="1" height="1" fill="#6a6a6a"/>
<rect x="614" y="113" width="1" height="1" fill="#6a6a6a"/>
<rect x="602" y="115" width="1" height="1" fill="#6a6a6a"/>
<rect x="608" y="115" width="1" height="1" fill="#6a6a6a"/>
<rect x="614" y="115" width="1" height="1" fill="#6a6a6a"/>
<rect x="602" y="116.9" width="13.2" height="1.3" fill="#6a6a6a"/>
<path d="M622.9 111 h5.2 l-2.6 3.0 z" fill="#666"/>
<text x="498" y="147" font-size="12" fill="#666" textLength="52.5" lengthAdjust="spacingAndGlyphs">Paragraph</text>
<path d="M634.5 146 v-5.5 h5.5" fill="none" stroke="#777" stroke-width="1"/>
<path d="M637 143 l3.6 3.6 m0 -3 v3 h-3" fill="none" stroke="#777" stroke-width="1"/>
<line x1="645.5" y1="64" x2="645.5" y2="147" stroke="#d6d6d6" stroke-width="1" />
<rect x="651.5" y="65.5" width="736" height="59" fill="#fff" stroke="#b4b4b4" stroke-width="1"/>
<rect x="654" y="69" width="68" height="52" fill="#fff" stroke="#c6c6c6" stroke-width="4"/>
<clipPath id="g0"><rect x="658.7" y="66" width="58.6" height="40"/></clipPath>
<clipPath id="g1"><rect x="730.7" y="66" width="58.6" height="40"/></clipPath>
<clipPath id="g2"><rect x="802.7" y="66" width="58.6" height="40"/></clipPath>
<clipPath id="g3"><rect x="874.7" y="66" width="58.6" height="40"/></clipPath>
<clipPath id="g4"><rect x="946.7" y="74" width="58.6" height="40"/></clipPath>
<clipPath id="g5"><rect x="1018.7" y="66" width="58.6" height="40"/></clipPath>
<clipPath id="g6"><rect x="1090.7" y="66" width="58.6" height="40"/></clipPath>
<clipPath id="g7"><rect x="1162.7" y="66" width="58.6" height="40"/></clipPath>
<clipPath id="g8"><rect x="1234.7" y="66" width="58.6" height="40"/></clipPath>
<clipPath id="g9"><rect x="1306.7" y="66" width="58.6" height="40"/></clipPath>
<g clip-path="url(#g0)">
<text x="658.6" y="91.8" font-size="12.8" fill="#000" textLength="60.8" lengthAdjust="spacingAndGlyphs">AaBbCcDc</text>
</g>
<text x="664" y="116" font-size="12" fill="#444" textLength="48" lengthAdjust="spacingAndGlyphs">¶ Normal</text>
<g clip-path="url(#g1)">
<text x="730.6" y="91.8" font-size="12.8" fill="#000" textLength="60.8" lengthAdjust="spacingAndGlyphs">AaBbCcDc</text>
</g>
<text x="729" y="116" font-size="12" fill="#444" textLength="61" lengthAdjust="spacingAndGlyphs">¶ No Spac...</text>
<g clip-path="url(#g2)">
<text x="803" y="94" font-size="22" fill="#2e74b5" textLength="58.5" lengthAdjust="spacingAndGlyphs" class="sf">AaBbC</text>
</g>
<text x="805" y="116" font-size="12" fill="#444" textLength="53" lengthAdjust="spacingAndGlyphs">Heading 1</text>
<g clip-path="url(#g3)">
<text x="875" y="93" font-size="16.5" fill="#2e74b5" textLength="67.5" lengthAdjust="spacingAndGlyphs" class="sf">AaBbCcD</text>
</g>
<text x="877.5" y="116" font-size="12" fill="#444" textLength="53.0" lengthAdjust="spacingAndGlyphs">Heading 2</text>
<g clip-path="url(#g4)">
<text x="947" y="94" font-size="36" fill="#000" textLength="62.5" lengthAdjust="spacingAndGlyphs" class="sf">AaB</text>
</g>
<text x="964.5" y="116" font-size="12" fill="#444" textLength="22.5" lengthAdjust="spacingAndGlyphs">Title</text>
<g clip-path="url(#g5)">
<text x="1019" y="92" font-size="12" fill="#5a5a5a" textLength="61.5" lengthAdjust="spacingAndGlyphs">AaBbCcD</text>
</g>
<text x="1028" y="116" font-size="12" fill="#444" textLength="40" lengthAdjust="spacingAndGlyphs">Subtitle</text>
<g clip-path="url(#g6)">
<text x="1091" y="92" font-size="13" fill="#404040" textLength="60.5" lengthAdjust="spacingAndGlyphs" font-style="italic">AaBbCcDc</text>
</g>
<text x="1089" y="116" font-size="12" fill="#444" textLength="61.5" lengthAdjust="spacingAndGlyphs">Subtle Em...</text>
<g clip-path="url(#g7)">
<text x="1163" y="92" font-size="13" fill="#000" textLength="60.5" lengthAdjust="spacingAndGlyphs" font-style="italic">AaBbCcDc</text>
</g>
<text x="1167.5" y="116" font-size="12" fill="#444" textLength="49.5" lengthAdjust="spacingAndGlyphs">Emphasis</text>
<g clip-path="url(#g8)">
<text x="1235" y="92" font-size="13" fill="#5b9bd5" textLength="60.5" lengthAdjust="spacingAndGlyphs" font-style="italic">AaBbCcDc</text>
</g>
<text x="1236" y="116" font-size="12" fill="#444" textLength="55.5" lengthAdjust="spacingAndGlyphs">Intense E...</text>
<g clip-path="url(#g9)">
<text x="1306.5" y="92" font-size="13" fill="#000" textLength="61.0" lengthAdjust="spacingAndGlyphs" font-weight="bold">AaBbCcDc</text>
</g>
<text x="1318" y="116" font-size="12" fill="#444" textLength="34.5" lengthAdjust="spacingAndGlyphs">Strong</text>
<rect x="1373.5" y="65.5" width="14" height="59" fill="#fff" stroke="#b4b4b4" stroke-width="1"/>
<rect x="1374" y="66" width="13" height="20.5" fill="#e6e6e6"/>
<line x1="1373.5" y1="86.5" x2="1387.5" y2="86.5" stroke="#c0c0c0" stroke-width="1" />
<line x1="1373.5" y1="105.5" x2="1387.5" y2="105.5" stroke="#c0c0c0" stroke-width="1" />
<path d="M1377.8 77.2 h5.4 l-2.7 -3.2 z" fill="#c4c4c4"/>
<path d="M1377.9 95 h5.2 l-2.6 3.0 z" fill="#666"/>
<line x1="1377" y1="112.7" x2="1384" y2="112.7" stroke="#666" stroke-width="1.2" />
<path d="M1377.4 115 h6.2 l-3.1 3.0 z" fill="#666"/>
<text x="998" y="147" font-size="12" fill="#666" textLength="28.5" lengthAdjust="spacingAndGlyphs">Styles</text>
<path d="M1384.5 146 v-5.5 h5.5" fill="none" stroke="#777" stroke-width="1"/>
<path d="M1387 143 l3.6 3.6 m0 -3 v3 h-3" fill="none" stroke="#777" stroke-width="1"/>
<line x1="1395.5" y1="64" x2="1395.5" y2="147" stroke="#d6d6d6" stroke-width="1" />
<circle cx="1412.3" cy="71.1" r="3.7" fill="none" stroke="#3c78c0" stroke-width="1.5"/>
<line x1="1409.6" y1="74" x2="1404.8" y2="78.6" stroke="#3c78c0" stroke-width="2.3" />
<text x="1422.5" y="78" font-size="12" fill="#444" textLength="21.5" lengthAdjust="spacingAndGlyphs">Find</text>
<path d="M1455.0 72 h5 l-2.5 3 z" fill="#666"/>
<text x="1402.8" y="95.1" font-size="10" fill="#444" textLength="5.8" lengthAdjust="spacingAndGlyphs">a</text>
<text x="1409" y="95.1" font-size="10" fill="#8a4fa5" textLength="6" lengthAdjust="spacingAndGlyphs">b</text>
<text x="1408.3" y="102.6" font-size="10" fill="#444" textLength="5.3" lengthAdjust="spacingAndGlyphs">a</text>
<text x="1413.9" y="102.6" font-size="10" fill="#2e75b6" textLength="4.9" lengthAdjust="spacingAndGlyphs">c</text>
<path d="M1403.5 98 v2.5 h3 M1405.2 99 L1406.7 100.5 L1405.2 102" fill="none" stroke="#2e75b6" stroke-width="1"/>
<text x="1422.5" y="101" font-size="12" fill="#444" textLength="40.5" lengthAdjust="spacingAndGlyphs">Replace</text>
<path d="M1407.8 111.8 V123.3 L1410.4 120.9 L1412.4 125.4 L1414 124.7 L1412 120.3 L1415.6 120 Z" fill="#f8f8f8" stroke="#555" stroke-width="1"/>
<text x="1422.5" y="124" font-size="12" fill="#444" textLength="30.5" lengthAdjust="spacingAndGlyphs">Select</text>
<path d="M1456.5 118 h5 l-2.5 3 z" fill="#666"/>
<text x="1417" y="147" font-size="12" fill="#666" textLength="35.5" lengthAdjust="spacingAndGlyphs">Editing</text>
<line x1="1474.5" y1="64" x2="1474.5" y2="147" stroke="#d6d6d6" stroke-width="1" />
<path d="M1501.7 69.8 H1510.5 L1516.2 75.5 V90.2 a2 2 0 0 1 -2 2 H1501.7 a2 2 0 0 1 -2 -2 V71.8 a2 2 0 0 1 2 -2 Z" fill="#f4f4f4" stroke="#111" stroke-width="1.4"/>
<path d="M1510.5 70 V75.5 H1516" fill="none" stroke="#111" stroke-width="1.3"/>
<path d="M1507.9 86 V79.4 M1504.5 82.6 L1507.9 79.2 L1511.3 82.6 M1503.2 88.6 H1512.8" fill="none" stroke="#111" stroke-width="1.3"/>
<text x="1481" y="112" font-size="12" fill="#444" textLength="53.5" lengthAdjust="spacingAndGlyphs">Share This</text>
<text x="1495.5" y="128" font-size="12" fill="#444" textLength="17.5" lengthAdjust="spacingAndGlyphs">File</text>
<path d="M1516.2 122 h5.2 l-2.6 3.0 z" fill="#666"/>
<circle cx="1558.9" cy="80.9" r="10.3" fill="#6cbf4b" stroke="#00b7e4" stroke-width="3.6"/>
<path d="M1566.9 73.7 A10.3 10.3 0 0 1 1551.2 87.8" fill="none" stroke="#0b4a6f" stroke-width="3.6"/>
<circle cx="1557" cy="79.6" r="6.9" fill="#fff"/>
<text x="1541" y="112" font-size="12" fill="#444" textLength="35" lengthAdjust="spacingAndGlyphs">Webex</text>
<path d="M1555.9 122 h5.2 l-2.6 3.0 z" fill="#666"/>
<text x="1512.5" y="147" font-size="12" fill="#666" textLength="34.5" lengthAdjust="spacingAndGlyphs">Webex</text>
<line x1="1584.5" y1="64" x2="1584.5" y2="147" stroke="#d6d6d6" stroke-width="1" />
<path d="M1661.5 145.5 L1665.5 141.5 L1669.5 145.5" fill="none" stroke="#555" stroke-width="1.3"/>

<!-- parts_status -->
<rect x="0" y="988" width="1680" height="22" fill="#f1f1f1"/>
<rect x="0" y="988" width="1680" height="1" fill="#c8c8c8"/>
<text x="8.2" y="1001.8" font-size="11" fill="#555" textLength="56.8" lengthAdjust="spacingAndGlyphs">Page 1 of 2</text>
<text x="84.4" y="1001.8" font-size="11" fill="#555" textLength="52.2" lengthAdjust="spacingAndGlyphs">119 words</text>
<path d="M156.5 993.5 H161 L163 995 V1004.5 L161 1003 H156.5 Z" fill="none" stroke="#666" stroke-width="1"/>
<path d="M163 995 L165 993.5 H166.5 M163 1004.5 L165 1003 H167" fill="none" stroke="#666" stroke-width="1"/>
<path d="M165 998.5 L166.8 1000.5 L170.5 995.5" fill="none" stroke="#666" stroke-width="1.2"/>
<rect x="192.6" y="998.5" width="10.8" height="5.9" fill="none" stroke="#6a6a6a" stroke-width="1"/>
<path d="M194.5 1000.5 H196 M197.3 1000.5 H198.8 M200.1 1000.5 H201.6 M194.5 1002.5 H196 M197.3 1002.5 H198.8 M200.1 1002.5 H201.6" fill="none" stroke="#6a6a6a" stroke-width="1"/>
<circle cx="193.8" cy="994.9" r="2.9" fill="#7a7a7a"/>
<path d="M197.5 994.4 H203.4 V998.5" fill="none" stroke="#6a6a6a" stroke-width="1.8"/>
<rect x="1426" y="989" width="38" height="21" fill="#c6c6c6"/>
<path d="M1400.5 992.5 H1405.2 L1406.4 993.6 L1407.6 992.5 H1412.4 V1002.5 H1407.6 L1406.4 1003.6 L1405.2 1002.5 H1400.5 Z" fill="none" stroke="#6a6a6a" stroke-width="1.1"/>
<path d="M1406.4 993.6 V1004.6 M1405 1003.4 L1406.4 1004.9 L1407.8 1003.4" fill="none" stroke="#6a6a6a" stroke-width="1"/>
<path d="M1402 994.6 H1405 M1402 996.6 H1405 M1402 998.6 H1405 M1402 1000.6 H1405 M1407.8 994.6 H1410.8 M1407.8 996.6 H1410.8 M1407.8 998.6 H1410.8 M1407.8 1000.6 H1410.8" fill="none" stroke="#6a6a6a" stroke-width="0.9"/>
<rect x="1438.8" y="992.6" width="12.4" height="11.6" fill="#d4d4d4" stroke="#6a6a6a" stroke-width="1.3"/>
<path d="M1440.2 994.9 H1450 M1440.2 996.9 H1450 M1440.2 998.9 H1450 M1440.2 1000.9 H1450 M1440.2 1002.6 H1450" fill="none" stroke="#6a6a6a" stroke-width="0.9"/>
<path d="M1476.6 1002.6 V992.5 H1487.2 V997.5 M1476.6 1002.6 H1482" fill="none" stroke="#6a6a6a" stroke-width="1.1"/>
<path d="M1478.4 994.6 H1485.6 M1478.4 996.6 H1484.4 M1478.4 998.6 H1482.4 M1478.4 1000.6 H1482" fill="none" stroke="#6a6a6a" stroke-width="0.9"/>
<circle cx="1486.3" cy="1001" r="3.8" fill="#6a6a6a" stroke="#f1f1f1" stroke-width="0.8"/>
<path d="M1483.6 1000 q1.6 -1.8 2.6 0 q0.2 1.6 -1.2 2.4 z M1487.4 999.2 q1.6 0.6 1.6 2.4 q-1.2 0.6 -1.6 -2.4 z" fill="#e6e6e6"/>
<rect x="1507" y="998" width="6" height="2" fill="#555"/>
<rect x="1517" y="998" width="100" height="1" fill="#a6a6a6"/>
<rect x="1567" y="996" width="1" height="5" fill="#a6a6a6"/>
<rect x="1575" y="993.2" width="4" height="10.6" fill="#6a6a6a"/>
<rect x="1621" y="998" width="8" height="2" fill="#555"/>
<rect x="1624" y="995" width="2" height="8" fill="#555"/>
<text x="1645.8" y="1001.9" font-size="11" fill="#747474" textLength="26.2" lengthAdjust="spacingAndGlyphs">180%</text>

<!-- parts_taskbar -->
<rect x="0" y="1010" width="1680" height="40" fill="#0f0f10"/>
<path d="M15.7 1024 L22.8 1023 V1029.3 H15.7 Z M23.8 1022.8 L32.5 1021.6 V1029.3 H23.8 Z M15.7 1030.3 H22.8 V1036.7 L15.7 1035.7 Z M23.8 1030.3 H32.5 V1038 L23.8 1036.8 Z" fill="#fff"/>
<circle cx="74.5" cy="1027.5" r="5" fill="none" stroke="#fff" stroke-width="1.4"/>
<line x1="71" y1="1031.3" x2="64.5" y2="1037.8" stroke="#fff" stroke-width="1.6" />
<rect x="114.5" y="1025.5" width="9" height="8" fill="none" stroke="#fff" stroke-width="1.3"/>
<path d="M112.2 1022.7 H122.5 M112.2 1036.3 H122.5 M126.8 1022.7 V1025 M126.8 1027 V1032 M126.8 1034 V1036.8" fill="none" stroke="#fff" stroke-width="1.3"/>
<path d="M160 1022.6 a1.2 1.2 0 0 1 1.2 -1.2 h6 l1.6 1.6 h11.6 a1.2 1.2 0 0 1 1.2 1.2 v14 h-21.6 z" fill="#f3cd55"/>
<rect x="160" y="1024.3" width="21.6" height="14" fill="#fbe6a0" rx="0.8"/>
<rect x="161.5" y="1021.9" width="4.5" height="1.2" fill="#fdf3cf"/>
<path d="M163.5 1038.8 v-7.8 h14.8 v7.8 h-3.4 v-4.6 h-8 v4.6 z" fill="#3eb1f2"/>
<rect x="151" y="1048" width="40" height="2" fill="#76b9ed"/>
<rect x="196" y="1010" width="48" height="40" fill="#9c5520"/>
<rect x="241" y="1010" width="1" height="40" fill="#8b4a1a"/>
<rect x="196" y="1048" width="48" height="2" fill="#f7630c"/>
<path d="M209 1021.5 L221 1019 V1039.5 L209 1037 Z" fill="#0a6fc4"/>
<rect x="220" y="1023" width="11" height="12" fill="#1a86d8"/>
<path d="M221 1024.5 h9 v5.5 h-9 z" fill="#fff"/>
<path d="M221 1024.5 l4.5 3.5 l4.5 -3.5" fill="none" stroke="#1a86d8" stroke-width="1"/>
<text x="211.2" y="1033" font-size="10" fill="#fff" font-weight="bold">O</text>
<rect x="219" y="1033" width="15" height="9.5" fill="#eebb7e"/>
<path d="M219 1033 l7.5 5.5 l7.5 -5.5" fill="none" stroke="#fff" stroke-width="1.1"/>
<path d="M268.7 1029.8 L259.17 1024.3 A11 11 0 0 1 278.22999999999996 1024.3 Z" fill="#de4a3c"/>
<path d="M268.7 1029.8 L278.22999999999996 1024.3 A11 11 0 0 1 268.7 1040.8 Z" fill="#ffce42"/>
<path d="M268.7 1029.8 L268.7 1040.8 A11 11 0 0 1 259.17 1024.3 Z" fill="#1a9f5c"/>
<path d="M268.7 1024.8 L279.5 1024.8 L278.22999999999996 1027.3 Z" fill="#de4a3c"/>
<path d="M273.0 1032.3 L267.59999999999997 1040.8 L271.7 1040.3999999999999 Z" fill="#ffce42"/>
<path d="M264.4 1032.3 L259.09999999999997 1023.5999999999999 L257.9 1027.8 Z" fill="#1a9f5c"/>
<circle cx="268.7" cy="1029.8" r="5.2" fill="#fff"/>
<circle cx="268.7" cy="1029.8" r="4.1" fill="#4285f4"/>
<rect x="249" y="1048" width="40" height="2" fill="#76b9ed"/>
<circle cx="316.5" cy="1029" r="9.3" fill="#fff"/>
<circle cx="311.5" cy="1023.3" r="5.2" fill="#fff"/>
<circle cx="321.5" cy="1034.7" r="5.2" fill="#fff"/>
<circle cx="316.5" cy="1029" r="7.8" fill="#00aff0"/>
<circle cx="311.8" cy="1023.6" r="3.9" fill="#00aff0"/>
<circle cx="321.2" cy="1034.4" r="3.9" fill="#00aff0"/>
<text x="316.5" y="1034.3" font-size="14.5" fill="#fff" font-weight="bold" text-anchor="middle">S</text>
<circle cx="326" cy="1038" r="5.2" fill="#fff"/>
<circle cx="326" cy="1038" r="4.2" fill="#f8b51c"/>
<path d="M326 1035.7 V1038.3 L327.6 1039.5" fill="none" stroke="#fff" stroke-width="1"/>
<rect x="298" y="1048" width="40" height="2" fill="#76b9ed"/>
<text x="357" y="1039.8" font-size="31" fill="#1ebbee" font-weight="bold" textLength="21" lengthAdjust="spacingAndGlyphs">e</text>
<path d="M358.5 1037 C352 1043 357 1030 370 1021.5 C377 1017.5 379 1019.5 376.3 1024" fill="none" stroke="#f6c430" stroke-width="2.2" stroke-linecap="round"/>
<rect x="347" y="1048" width="40" height="2" fill="#76b9ed"/>
<circle cx="416" cy="1029.2" r="11" fill="#fff"/>
<circle cx="416" cy="1029.2" r="8.4" fill="#6cbf4b" stroke="#00b7e4" stroke-width="3.6"/>
<path d="M422.5 1023.3 A8.4 8.4 0 0 1 409.7 1034.8" fill="none" stroke="#0b4a6f" stroke-width="3.6"/>
<circle cx="414.3" cy="1027.8" r="5.2" fill="#fff"/>
<rect x="396" y="1048" width="40" height="2" fill="#76b9ed"/>
<rect x="454" y="1018.8" width="21" height="20.2" fill="#c4110f"/>
<rect x="454" y="1018.8" width="21" height="9" fill="#dd1512"/>
<path d="M458.5 1034.5 C462 1032 464.5 1027 464 1023.5 C463.6 1021.8 462 1022.5 462.8 1025 C464 1029 467.5 1032 471 1032.2 C472.3 1032 471.5 1030.5 469 1030.8 C465 1031.2 461 1032.5 458.5 1034.5 Z" fill="none" stroke="#fff" stroke-width="1.1"/>
<rect x="445" y="1048" width="40" height="2" fill="#76b9ed"/>
<path d="M503 1022 L519 1021.6 V1039.7 L503 1039.2 Z" fill="#7fb2dc"/>
<path d="M519 1021.6 L522.8 1022.6 V1038.7 L519 1039.7 Z" fill="#4f86b8"/>
<circle cx="511" cy="1030.5" r="6.6" fill="#f58220"/>
<circle cx="511" cy="1030.5" r="6.6" fill="none" stroke="#fbd3a8" stroke-width="0.8"/>
<path d="M509 1027 L514.8 1030.5 L509 1034 Z" fill="#fff"/>
<rect x="494" y="1048" width="40" height="2" fill="#76b9ed"/>
<rect x="539" y="1010" width="45" height="40" fill="#363636"/>
<rect x="585" y="1010" width="2" height="40" fill="#2a2a2a"/>
<rect x="539" y="1048" width="45" height="2" fill="#76b9ed"/>
<rect x="562" y="1021.5" width="11.8" height="15" fill="#fff"/>
<path d="M564 1024.5 H572 M564 1027 H572 M564 1029.5 H572 M564 1032 H572 M564 1034.5 H572" fill="none" stroke="#2b579a" stroke-width="1"/>
<path d="M551.6 1021 L564 1018.8 V1039 L551.6 1036.8 Z" fill="#2b579a"/>
<text x="553.2" y="1033" font-size="9.5" fill="#fff" font-weight="bold" textLength="9.3" lengthAdjust="spacingAndGlyphs">W</text>
<path d="M1497.3 1033 L1503.2 1027 L1509.1 1033" fill="none" stroke="#fff" stroke-width="1.3"/>
<rect x="1523.5" y="1024.5" width="11" height="8.6" fill="none" stroke="#fff" stroke-width="1.2"/>
<path d="M1528.2 1033.2 V1036 M1521.4 1036.3 H1531.2" fill="none" stroke="#fff" stroke-width="1.2"/>
<rect x="1519.2" y="1024.3" width="4.4" height="5" fill="#0f0f10" stroke="#fff" stroke-width="1.1"/>
<line x1="1521.4" y1="1029" x2="1521.4" y2="1036.3" stroke="#fff" stroke-width="1.1" />
<line x1="1520.4" y1="1026.4" x2="1522.4" y2="1026.4" stroke="#fff" stroke-width="1" />
<path d="M1543.4 1027.6 H1545.9 L1549 1024.4 V1035.6 L1545.9 1032.4 H1543.4 Z" fill="none" stroke="#fff" stroke-width="1.1"/>
<path d="M1551.6 1027.4 q1.8 2.6 0 5.2 M1554 1025.6 q3.2 4.4 0 8.8 M1556.4 1023.8 q4.8 6.2 0 12.4" fill="none" stroke="#fff" stroke-width="1.1"/>
<text x="1573.4" y="1024.7" font-size="11.6" fill="#fff" textLength="43.4" lengthAdjust="spacingAndGlyphs">2:17 PM</text>
<text x="1571.4" y="1042.3" font-size="11.6" fill="#fff" textLength="47.2" lengthAdjust="spacingAndGlyphs">6/6/2019</text>
<path d="M1639.7 1023 H1654.3 V1034.4 H1650 L1647 1037.6 L1644 1034.4 H1639.7 Z" fill="none" stroke="#fff" stroke-width="1.4"/>
<line x1="1675.5" y1="1010" x2="1675.5" y2="1050" stroke="#4a4a4a" stroke-width="1" />

</svg>
</body></html>
